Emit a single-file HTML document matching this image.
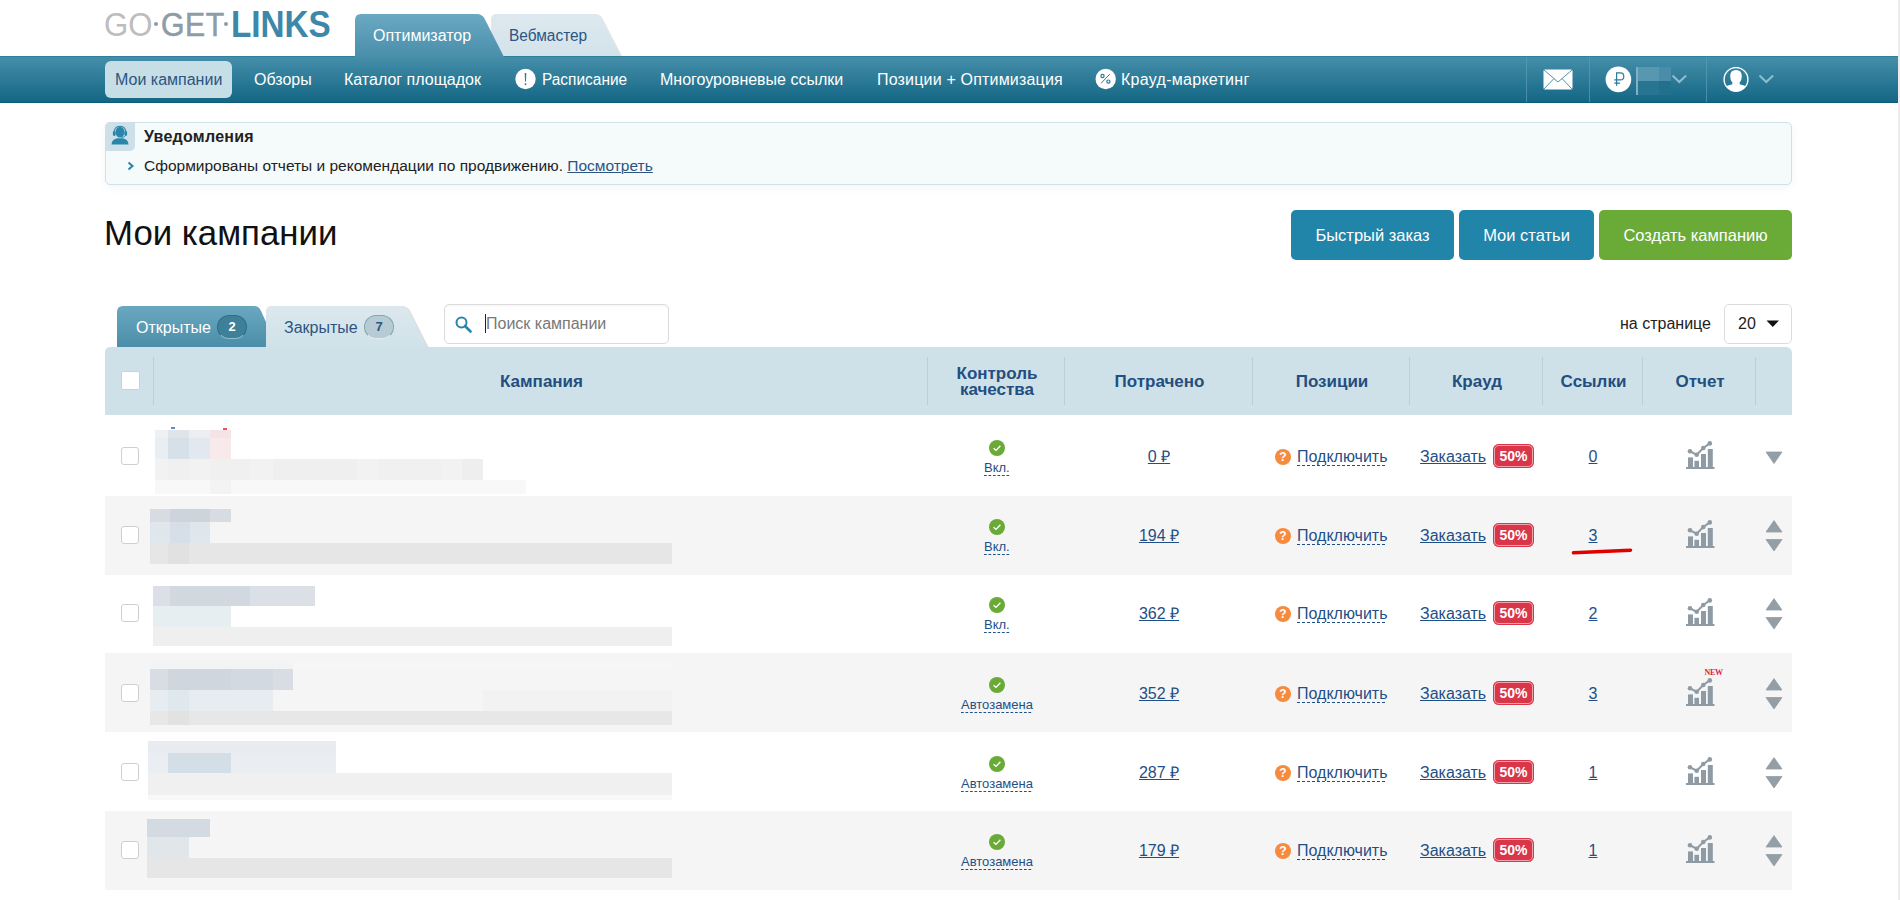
<!DOCTYPE html>
<html><head><meta charset="utf-8">
<style>
*{box-sizing:border-box;margin:0;padding:0}
html,body{width:1900px;height:900px;overflow:hidden;background:#fff}
body{font-family:"Liberation Sans",sans-serif;font-size:16px;color:#222;position:relative}
.abs{position:absolute;white-space:nowrap}
.sb{position:absolute;left:1898px;top:0;width:2px;height:900px;background:#ececec}
/* logo */
.logo span{position:absolute;top:0;line-height:48px;font-size:34px;white-space:nowrap}
/* top tabs */
.ttab{position:absolute;top:14px;height:42px}
/* navbar */
.nav{position:absolute;left:0;top:56px;width:1898px;height:47px;background:linear-gradient(#458ea9,#136785);border-top:1px solid #2e7f9b;border-bottom:1px solid #0b5b79}
.nav .it{position:absolute;top:0;height:45px;line-height:45px;color:#fff;font-size:16px;white-space:nowrap}
.pill{position:absolute;left:105px;top:4px;width:127px;height:37px;border-radius:6px;background:#c6dee6}
.vline{position:absolute;top:0;width:1px;height:45px;background:#5b9db5;opacity:.7}
/* notification */
.note{position:absolute;left:105px;top:122px;width:1687px;height:63px;border:1px solid #cfe1e9;border-radius:5px;background:#f5fafb;box-shadow:0 3px 10px rgba(0,0,0,.045)}
.btn{position:absolute;top:210px;height:50px;border-radius:5px;color:#fff;font-size:16.5px;line-height:50px;text-align:center;white-space:nowrap}
.blue{background:#2184a9}
.green{background:#6aab37}
/* table */
.thead{position:absolute;left:105px;top:347px;width:1687px;height:68px;background:#cfe1e8;border-top-right-radius:6px;border-top-left-radius:5px}
.th{position:absolute;top:1px;padding-left:3px;height:68px;display:flex;align-items:center;justify-content:center;text-align:center;font-weight:bold;font-size:17px;color:#234e80;line-height:16px}
.hdiv{position:absolute;top:10px;width:1px;height:48px;background:#b9d0da}
.row{position:absolute;left:105px;width:1687px}
.gray{background:#f5f5f5}
.cb{position:absolute;width:18px;height:18px;border:1px solid #cfcfcf;border-radius:3px;background:#fff}
.lnk{color:#2c5581;text-decoration:underline;text-underline-offset:2px}
.dash{color:#2c5581;border-bottom:1px dashed #2c5581}
.blk{position:absolute}
.cen{text-align:center}
.lnk16{font-size:16px;line-height:20px;color:#1f4f85}
.lnk{color:#1f4f85;text-decoration:underline;text-decoration-thickness:1px;text-underline-offset:1px}
.dashu{color:#1f4f85;background-image:linear-gradient(to right,#1f4f85 60%,transparent 60%);background-size:5px 1px;background-repeat:repeat-x;background-position:0 17px;padding-bottom:2px}
.qc{font-size:13px;line-height:16px;color:#1f4f85;background-image:linear-gradient(to right,#1f4f85 70%,transparent 70%);background-size:4.5px 1px;background-repeat:repeat-x;background-position:0 15px}
.badge{width:41px;height:24px;border-radius:6px;background:#d9364a;box-shadow:inset 0 0 0 1px #d9364a,inset 0 0 0 2px #f3a3ad;color:#fff;font-weight:bold;font-size:14px;line-height:25px;text-align:center}
</style></head><body>
<div class="sb"></div>

<!-- LOGO -->
<div class="logo">
 <span style="left:104px;top:0.6px;font-size:33.5px;line-height:48px;color:#bdbdbd;transform:scaleX(0.93);transform-origin:0 0">GO</span>
 <span style="left:161px;top:0.6px;font-size:33.5px;line-height:48px;color:#8d9ca7;-webkit-text-stroke:0.6px #8d9ca7;transform:scaleX(0.9);transform-origin:0 0;letter-spacing:0.6px">GET</span>
 <span style="left:231px;top:1px;font-size:36px;line-height:48px;color:#3d87a9;font-weight:bold;transform:scaleX(0.924);transform-origin:0 0">LINKS</span>
 <i style="position:absolute;left:154px;top:22px;width:4px;height:4px;border-radius:2px;background:#8d9ca7"></i>
 <i style="position:absolute;left:224px;top:22px;width:4px;height:4px;border-radius:2px;background:#8d9ca7"></i>
</div>
<!-- NAVBAR -->
<div class="nav">
 <div class="pill"></div>
 <div class="it" style="left:115px;color:#2c5581">Мои кампании</div>
 <div class="it" style="left:254px">Обзоры</div>
 <div class="it" style="left:344px">Каталог площадок</div>
 <div class="it" style="left:542px;transform:scaleX(0.965);transform-origin:0 0">Расписание</div>
 <div class="it" style="left:660px">Многоуровневые ссылки</div>
 <div class="it" style="left:877px;letter-spacing:0.18px">Позиции + Оптимизация</div>
 <div class="it" style="left:1121px;letter-spacing:0.28px">Крауд-маркетинг</div>
 <svg style="position:absolute;left:515px;top:11px" width="22" height="22" viewBox="0 0 22 22"><circle cx="10.5" cy="11" r="10.2" fill="#fff"/><path d="M9.7 5 L11.3 5 L11 13.5 L10 13.5 Z" fill="#2a7b9a"/><rect x="9.7" y="15.3" width="1.6" height="1.8" fill="#2a7b9a"/></svg>
 <svg style="position:absolute;left:1095px;top:11px" width="22" height="22" viewBox="0 0 22 22"><circle cx="10.7" cy="11" r="10.2" fill="#fff"/><circle cx="7.5" cy="8" r="1.6" fill="none" stroke="#2a7b9a" stroke-width="1.2"/><circle cx="13.4" cy="13.6" r="1.6" fill="none" stroke="#2a7b9a" stroke-width="1.2"/><path d="M6 15.3 L14.7 6.3" stroke="#2a7b9a" stroke-width="1"/></svg>
 <div class="vline" style="left:1526px"></div>
 <svg style="position:absolute;left:1543px;top:12px" width="30" height="21" viewBox="0 0 30 21"><rect x="0.5" y="0.5" width="29" height="20" rx="1.5" fill="#fff"/><path d="M1 1 L15 13 L29 1" fill="none" stroke="#3a87a5" stroke-width="0.9"/><path d="M1 20 L11 9.5 M29 20 L19 9.5" fill="none" stroke="#3a87a5" stroke-width="0.9"/></svg>
 <svg style="position:absolute;left:1605px;top:9.3px" width="27" height="27" viewBox="0 0 27 27"><circle cx="13.4" cy="13.4" r="12.8" fill="#fff"/><path d="M11.6 19.8 V6.8 H15.3 Q18.8 6.8 18.8 10.4 Q18.8 13.9 15.3 13.9 H9.3 M9.3 17.1 H15" fill="none" stroke="#2a7b9a" stroke-width="1.2"/></svg>
 <div style="position:absolute;left:1636px;top:10px;width:23px;height:14px;background:#5897b0"></div>
 <div style="position:absolute;left:1659px;top:10px;width:12px;height:14px;background:#4a8daa"></div>
 <div style="position:absolute;left:1636px;top:24px;width:23px;height:14px;background:#287591"></div>
 <div style="position:absolute;left:1659px;top:24px;width:12px;height:14px;background:#23708e"></div>
 <div style="position:absolute;left:1636px;top:10px;width:2px;height:28px;background:#7fb0c4"></div>
 <svg style="position:absolute;left:1671px;top:17px" width="17" height="11" viewBox="0 0 17 11"><path d="M1.5 1.5 L8.3 8.1 L15.1 1.5" fill="none" stroke="#8dbccd" stroke-width="2.1"/></svg>
 <svg style="position:absolute;left:1722px;top:10px" width="28" height="27" viewBox="0 0 28 27"><defs><clipPath id="uc"><circle cx="14" cy="12.45" r="11.6"/></clipPath></defs><circle cx="14" cy="12.45" r="11.9" fill="none" stroke="#fff" stroke-width="1.4"/><g clip-path="url(#uc)"><path d="M14 3 Q19.8 3 19.8 9.2 Q19.8 13.5 17.6 15.8 L17.6 17.3 Q23 18.6 27 21 L27 27 L1 27 L1 21 Q5 18.6 10.4 17.3 L10.4 15.8 Q8.2 13.5 8.2 9.2 Q8.2 3 14 3 Z" fill="#fff"/></g></svg>
 <svg style="position:absolute;left:1758px;top:17px" width="17" height="11" viewBox="0 0 17 11"><path d="M1.5 1.5 L8.3 8.1 L15.1 1.5" fill="none" stroke="#8dbccd" stroke-width="2.1"/></svg>
 <div class="vline" style="left:1589px"></div>
 <div class="vline" style="left:1706px"></div>
</div>

<!-- TOP TABS -->
<svg class="abs" style="left:0;top:0" width="700" height="57">
 <defs>
  <linearGradient id="tg1" x1="0" y1="0" x2="0" y2="1"><stop offset="0" stop-color="#6aa9c2"/><stop offset="1" stop-color="#4a8eaa"/></linearGradient>
  <linearGradient id="tg2" x1="0" y1="0" x2="0" y2="1"><stop offset="0" stop-color="#dde9ef"/><stop offset="1" stop-color="#d3e3ea"/></linearGradient>
 </defs>
 <path d="M491 56 L491 20 Q491 14 497 14 L595 14 Q600 14 602.5 18.5 L622 56 Z" fill="#c9c9c9" opacity="0.5"/>
 <path d="M491 56 L491 20 Q491 14 497 14 L594 14 Q599 14 601.5 18.5 L620.5 56 Z" fill="url(#tg2)"/>
 <path d="M355 57 L355 20 Q355 14 361 14 L477 14 Q482 14 484.5 18.5 L504 57 Z" fill="url(#tg1)"/>
</svg>
<div class="abs" style="left:373px;top:25px;font-size:16px;line-height:22px;color:#fff">Оптимизатор</div>
<div class="abs" style="left:509px;top:25px;font-size:16px;line-height:22px;color:#2c5581;transform:scaleX(0.965);transform-origin:0 0">Вебмастер</div>

<!-- NOTIFICATION -->
<div class="note">
 <div style="position:absolute;left:-1px;top:-1px;width:30px;height:29px;background:#cde0e9;border-radius:5px 0 5px 0"></div>
 <svg style="position:absolute;left:-1px;top:-1px" width="30" height="29" viewBox="0 0 30 29"><path d="M8.8 12.5 Q8.8 4.2 15 4.2 Q21.2 4.2 21.2 12.5" fill="none" stroke="#2a85ab" stroke-width="1.1"/><ellipse cx="15" cy="10.2" rx="4.6" ry="5.4" fill="#2a85ab"/><rect x="7.9" y="9.3" width="2.6" height="4.6" rx="1.1" fill="#2a85ab"/><rect x="19.5" y="9.3" width="2.6" height="4.6" rx="1.1" fill="#2a85ab"/><path d="M20.5 13.5 Q19.8 15.4 16.5 15.4" fill="none" stroke="#2a85ab" stroke-width="0.9"/><path d="M6.5 22.5 Q6.8 17 12.5 16.2 L17.5 16.2 Q23.2 17 23.5 22.5 Z" fill="#2a85ab"/></svg>
 <div class="abs" style="left:38px;top:4px;font-size:16px;letter-spacing:0.25px;line-height:20px;font-weight:bold;color:#222">Уведомления</div>
 <svg style="position:absolute;left:21px;top:38px" width="8" height="10" viewBox="0 0 8 10"><path d="M1.5 1.5 L5.5 5 L1.5 8.5" fill="none" stroke="#2a85ab" stroke-width="2"/></svg>
 <div class="abs" style="left:38px;top:33px;font-size:15.5px;line-height:20px;color:#222">Сформированы отчеты и рекомендации по продвижению. <span class="lnk" style="color:#2c5581">Посмотреть</span></div>
</div>

<div class="abs" style="left:104px;top:205.5px;font-size:34.8px;line-height:54px;color:#111">Мои кампании</div>
<div class="btn blue" style="left:1291px;width:163px">Быстрый заказ</div>
<div class="btn blue" style="left:1459px;width:135px">Мои статьи</div>
<div class="btn green" style="left:1599px;width:193px">Создать кампанию</div>


<!-- LIST TABS -->
<svg class="abs" style="left:0;top:300px" width="440" height="48">
 <defs>
  <linearGradient id="lt1" x1="0" y1="0" x2="0" y2="1"><stop offset="0" stop-color="#6aa8c0"/><stop offset="1" stop-color="#4b8ea9"/></linearGradient>
  <linearGradient id="lt2" x1="0" y1="0" x2="0" y2="1"><stop offset="0" stop-color="#dce8ee"/><stop offset="1" stop-color="#d0e2e9"/></linearGradient>
 </defs>
 <path d="M266 47 L266 12 Q266 6 272 6 L402 6 Q407 6 410 10.5 L428.5 47 Z" fill="#c8c8c8" opacity="0.6"/>
 <path d="M266 47 L266 12 Q266 6 272 6 L401 6 Q406 6 408.5 10.5 L426.5 47 Z" fill="url(#lt2)"/>
 <path d="M117 47 L117 12 Q117 6 123 6 L254 6 Q259 6 261 11 L266 22 L266 47 Z" fill="url(#lt1)"/>
</svg>
<div class="abs" style="left:136px;top:318px;font-size:16px;line-height:20px;color:#fff">Открытые</div>
<div class="abs" style="left:217px;top:315px;width:30px;height:24px;border-radius:12px;background:#3f8099;border:1px solid #2f6d86;border-bottom-color:#8cbfcf;color:#fff;font-weight:bold;font-size:13px;line-height:22px;text-align:center">2</div>
<div class="abs" style="left:284px;top:318px;font-size:16px;line-height:20px;color:#2c5581">Закрытые</div>
<div class="abs" style="left:364px;top:315px;width:30px;height:24px;border-radius:12px;background:#b6cbd4;border:1px solid #86a4b1;border-bottom-color:#e2edf1;color:#2c5581;font-weight:bold;font-size:13px;line-height:22px;text-align:center">7</div>

<div class="abs" style="left:444px;top:304px;width:225px;height:40px;border:1px solid #dcdcdc;border-radius:5px;background:#fff;box-shadow:inset 0 1px 2px rgba(0,0,0,.05)"></div>
<svg class="abs" style="left:455px;top:316px" width="18" height="17" viewBox="0 0 18 17"><circle cx="6.5" cy="6.5" r="5" fill="none" stroke="#2a85ab" stroke-width="2"/><path d="M10 10 L15.5 15.5" stroke="#2a85ab" stroke-width="2.6" stroke-linecap="round"/></svg>
<div class="abs" style="left:485px;top:314px;width:1px;height:19px;background:#222"></div>
<div class="abs" style="left:486px;top:314px;font-size:16px;line-height:20px;color:#787878">Поиск кампании</div>

<div class="abs" style="left:1620px;top:314px;font-size:16px;line-height:20px;color:#222">на странице</div>
<div class="abs" style="left:1724px;top:304px;width:68px;height:40px;border:1px solid #dcdcdc;border-radius:5px;background:#fff"></div>
<div class="abs" style="left:1738px;top:314px;font-size:16px;line-height:20px;color:#222">20</div>
<svg class="abs" style="left:1766px;top:320px" width="14" height="8" viewBox="0 0 14 8"><path d="M0.5 0.5 L13 0.5 L6.75 7 Z" fill="#111"/></svg>
<!-- TABLE HEADER -->
<div class="thead">
 <div style="position:absolute;left:16px;top:24px;width:19px;height:19px;border:1px solid #d0d0d0;border-radius:2px;background:#fff"></div>
 <div class="hdiv" style="left:48px"></div>
 <div class="th" style="left:48px;width:774px">Кампания</div>
 <div class="hdiv" style="left:822px"></div>
 <div class="th" style="left:822px;width:137px">Контроль<br>качества</div>
 <div class="hdiv" style="left:959px"></div>
 <div class="th" style="left:959px;width:188px">Потрачено</div>
 <div class="hdiv" style="left:1147px"></div>
 <div class="th" style="left:1147px;width:157px">Позиции</div>
 <div class="hdiv" style="left:1304px"></div>
 <div class="th" style="left:1304px;width:133px">Крауд</div>
 <div class="hdiv" style="left:1437px"></div>
 <div class="th" style="left:1437px;width:100px">Ссылки</div>
 <div class="hdiv" style="left:1537px"></div>
 <div class="th" style="left:1537px;width:113px">Отчет</div>
 <div class="hdiv" style="left:1650px"></div>
</div>

<!-- ROWS -->
<div class="row" style="top:415px;height:81px;background:#fff"></div>
<div class="blk" style="left:155px;top:430px;width:13px;height:8px;background:#eef0f3"></div>
<div class="blk" style="left:168px;top:430px;width:21px;height:8px;background:#dfe4e9"></div>
<div class="blk" style="left:189px;top:430px;width:21px;height:8px;background:#eceef2"></div>
<div class="blk" style="left:210px;top:430px;width:21px;height:8px;background:#f5e3e5"></div>
<div class="blk" style="left:155px;top:438px;width:13px;height:21px;background:#e8eef2"></div>
<div class="blk" style="left:168px;top:438px;width:21px;height:21px;background:#d5e0e8"></div>
<div class="blk" style="left:189px;top:438px;width:21px;height:21px;background:#e2e8ef"></div>
<div class="blk" style="left:210px;top:438px;width:21px;height:21px;background:#f8e9eb"></div>
<div class="blk" style="left:155px;top:459px;width:328px;height:21px;background:#f2f2f2"></div>
<div class="blk" style="left:168px;top:459px;width:21px;height:21px;background:#eff0ef"></div>
<div class="blk" style="left:210px;top:459px;width:40px;height:21px;background:#f0f0f0"></div>
<div class="blk" style="left:273px;top:459px;width:84px;height:21px;background:#efefef"></div>
<div class="blk" style="left:378px;top:459px;width:63px;height:21px;background:#f0f0f0"></div>
<div class="blk" style="left:462px;top:459px;width:21px;height:21px;background:#eeeeee"></div>
<div class="blk" style="left:155px;top:480px;width:371px;height:14px;background:#f8f8f8"></div>
<div class="blk" style="left:210px;top:480px;width:21px;height:14px;background:#f3f3f3"></div>
<div class="blk" style="left:171px;top:427px;width:4px;height:2px;background:#5a90c4"></div>
<div class="blk" style="left:223px;top:428px;width:4px;height:2px;background:#e8506a"></div>
<div class="cb" style="left:121px;top:447px"></div>
<svg class="abs" style="left:989px;top:439.7px" width="16" height="16" viewBox="0 0 16 16"><circle cx="8" cy="8" r="8" fill="#6aab37"/><path d="M4.6 8.2 L7 10.4 L11.4 5.8" fill="none" stroke="#fff" stroke-width="1.35"/></svg>
<div class="abs qc" style="left:984.0px;top:459.8px">Вкл.</div>
<div class="abs cen lnk16" style="left:1061px;width:196px;top:447.0px"><span class="lnk">0 ₽</span></div>
<svg class="abs" style="left:1275px;top:449.0px" width="16" height="16" viewBox="0 0 16 16"><circle cx="8" cy="8" r="8" fill="#f68a3d"/><text x="8" y="12.3" text-anchor="middle" font-family="Liberation Sans" font-size="12" font-weight="bold" fill="#fff">?</text></svg>
<div class="abs lnk16" style="left:1297px;top:447.0px"><span class="dashu">Подключить</span></div>
<div class="abs lnk16" style="left:1420px;top:447.0px"><span class="lnk">Заказать</span></div>
<div class="abs badge" style="left:1493px;top:444.0px">50%</div>
<div class="abs cen lnk16" style="left:1543px;width:100px;top:447.0px"><span class="lnk">0</span></div>
<svg class="abs" style="left:1686px;top:440.5px" width="29" height="29" viewBox="0 0 29 29"><g fill="#8f9ba4"><rect x="0" y="26" width="28.5" height="2"/><rect x="2" y="16.4" width="5" height="10"/><rect x="8.4" y="19.8" width="4.6" height="7"/><rect x="15" y="13" width="5" height="13.5"/><rect x="21.8" y="8" width="5" height="18.5"/><circle cx="4" cy="10.3" r="2.3"/><circle cx="10.7" cy="13.7" r="2.3"/><circle cx="17.3" cy="7" r="2.3"/><circle cx="23.8" cy="2.4" r="2.3"/></g><path d="M4 10.3 L10.7 13.7 L17.3 7 L23.8 2.4" fill="none" stroke="#8f9ba4" stroke-width="2"/></svg>
<svg class="abs" style="left:1765px;top:450.5px" width="18" height="14" viewBox="0 0 18 14"><path d="M1 1 L17 1 L9 12.5 Z" fill="#939ea6" stroke="#939ea6" stroke-width="0.8" stroke-linejoin="round"/></svg>
<div class="row" style="top:496px;height:79px;background:#f5f5f5"></div>
<div class="blk" style="left:150px;top:509px;width:81px;height:13px;background:#d7dce3"></div>
<div class="blk" style="left:170px;top:509px;width:40px;height:13px;background:#cdd4dc"></div>
<div class="blk" style="left:150px;top:522px;width:60px;height:21px;background:#dfe6ec"></div>
<div class="blk" style="left:170px;top:522px;width:20px;height:21px;background:#d6dfe7"></div>
<div class="blk" style="left:150px;top:543px;width:522px;height:21px;background:#e6e6e6"></div>
<div class="blk" style="left:168px;top:543px;width:21px;height:21px;background:#e1e1e1"></div>
<div class="cb" style="left:121px;top:526px"></div>
<svg class="abs" style="left:989px;top:518.7px" width="16" height="16" viewBox="0 0 16 16"><circle cx="8" cy="8" r="8" fill="#6aab37"/><path d="M4.6 8.2 L7 10.4 L11.4 5.8" fill="none" stroke="#fff" stroke-width="1.35"/></svg>
<div class="abs qc" style="left:984.0px;top:538.8px">Вкл.</div>
<div class="abs cen lnk16" style="left:1061px;width:196px;top:526.0px"><span class="lnk">194 ₽</span></div>
<svg class="abs" style="left:1275px;top:528.0px" width="16" height="16" viewBox="0 0 16 16"><circle cx="8" cy="8" r="8" fill="#f68a3d"/><text x="8" y="12.3" text-anchor="middle" font-family="Liberation Sans" font-size="12" font-weight="bold" fill="#fff">?</text></svg>
<div class="abs lnk16" style="left:1297px;top:526.0px"><span class="dashu">Подключить</span></div>
<div class="abs lnk16" style="left:1420px;top:526.0px"><span class="lnk">Заказать</span></div>
<div class="abs badge" style="left:1493px;top:523.0px">50%</div>
<div class="abs cen lnk16" style="left:1543px;width:100px;top:526.0px"><span class="lnk">3</span></div>
<svg class="abs" style="left:1686px;top:519.5px" width="29" height="29" viewBox="0 0 29 29"><g fill="#8f9ba4"><rect x="0" y="26" width="28.5" height="2"/><rect x="2" y="16.4" width="5" height="10"/><rect x="8.4" y="19.8" width="4.6" height="7"/><rect x="15" y="13" width="5" height="13.5"/><rect x="21.8" y="8" width="5" height="18.5"/><circle cx="4" cy="10.3" r="2.3"/><circle cx="10.7" cy="13.7" r="2.3"/><circle cx="17.3" cy="7" r="2.3"/><circle cx="23.8" cy="2.4" r="2.3"/></g><path d="M4 10.3 L10.7 13.7 L17.3 7 L23.8 2.4" fill="none" stroke="#8f9ba4" stroke-width="2"/></svg>
<svg class="abs" style="left:1765px;top:520.3px" width="18" height="32" viewBox="0 0 18 32"><path d="M1 12 L9 0.6 L17 12 Z M1 19.5 L17 19.5 L9 31 Z" fill="#939ea6" stroke="#939ea6" stroke-width="0.8" stroke-linejoin="round"/></svg>
<div class="row" style="top:575px;height:78px;background:#fff"></div>
<div class="blk" style="left:153px;top:586px;width:162px;height:20px;background:#dbe0e6"></div>
<div class="blk" style="left:170px;top:586px;width:80px;height:20px;background:#d2d8df"></div>
<div class="blk" style="left:153px;top:606px;width:78px;height:21px;background:#e6eef2"></div>
<div class="blk" style="left:153px;top:627px;width:519px;height:19px;background:#efefef"></div>
<div class="cb" style="left:121px;top:604px"></div>
<svg class="abs" style="left:989px;top:596.8px" width="16" height="16" viewBox="0 0 16 16"><circle cx="8" cy="8" r="8" fill="#6aab37"/><path d="M4.6 8.2 L7 10.4 L11.4 5.8" fill="none" stroke="#fff" stroke-width="1.35"/></svg>
<div class="abs qc" style="left:984.0px;top:616.9px">Вкл.</div>
<div class="abs cen lnk16" style="left:1061px;width:196px;top:604.1px"><span class="lnk">362 ₽</span></div>
<svg class="abs" style="left:1275px;top:606.1px" width="16" height="16" viewBox="0 0 16 16"><circle cx="8" cy="8" r="8" fill="#f68a3d"/><text x="8" y="12.3" text-anchor="middle" font-family="Liberation Sans" font-size="12" font-weight="bold" fill="#fff">?</text></svg>
<div class="abs lnk16" style="left:1297px;top:604.1px"><span class="dashu">Подключить</span></div>
<div class="abs lnk16" style="left:1420px;top:604.1px"><span class="lnk">Заказать</span></div>
<div class="abs badge" style="left:1493px;top:601.1px">50%</div>
<div class="abs cen lnk16" style="left:1543px;width:100px;top:604.1px"><span class="lnk">2</span></div>
<svg class="abs" style="left:1686px;top:597.6px" width="29" height="29" viewBox="0 0 29 29"><g fill="#8f9ba4"><rect x="0" y="26" width="28.5" height="2"/><rect x="2" y="16.4" width="5" height="10"/><rect x="8.4" y="19.8" width="4.6" height="7"/><rect x="15" y="13" width="5" height="13.5"/><rect x="21.8" y="8" width="5" height="18.5"/><circle cx="4" cy="10.3" r="2.3"/><circle cx="10.7" cy="13.7" r="2.3"/><circle cx="17.3" cy="7" r="2.3"/><circle cx="23.8" cy="2.4" r="2.3"/></g><path d="M4 10.3 L10.7 13.7 L17.3 7 L23.8 2.4" fill="none" stroke="#8f9ba4" stroke-width="2"/></svg>
<svg class="abs" style="left:1765px;top:598.4px" width="18" height="32" viewBox="0 0 18 32"><path d="M1 12 L9 0.6 L17 12 Z M1 19.5 L17 19.5 L9 31 Z" fill="#939ea6" stroke="#939ea6" stroke-width="0.8" stroke-linejoin="round"/></svg>
<div class="row" style="top:653px;height:79px;background:#f5f5f5"></div>
<div class="blk" style="left:150px;top:663px;width:522px;height:6px;background:#f7f7f7"></div>
<div class="blk" style="left:150px;top:663px;width:143px;height:6px;background:#f2f3f4"></div>
<div class="blk" style="left:483px;top:690px;width:189px;height:21px;background:#f2f2f2"></div>
<div class="blk" style="left:150px;top:669px;width:143px;height:21px;background:#d8dde3"></div>
<div class="blk" style="left:168px;top:669px;width:84px;height:21px;background:#d0d6de"></div>
<div class="blk" style="left:231px;top:669px;width:42px;height:21px;background:#d3d9e0"></div>
<div class="blk" style="left:150px;top:690px;width:123px;height:21px;background:#e6ecef"></div>
<div class="blk" style="left:168px;top:690px;width:21px;height:21px;background:#dfe8ec"></div>
<div class="blk" style="left:150px;top:711px;width:522px;height:14px;background:#e7e7e7"></div>
<div class="blk" style="left:168px;top:711px;width:21px;height:14px;background:#e2e2e2"></div>
<div class="cb" style="left:121px;top:684px"></div>
<svg class="abs" style="left:989px;top:676.7px" width="16" height="16" viewBox="0 0 16 16"><circle cx="8" cy="8" r="8" fill="#6aab37"/><path d="M4.6 8.2 L7 10.4 L11.4 5.8" fill="none" stroke="#fff" stroke-width="1.35"/></svg>
<div class="abs qc" style="left:961.0px;top:696.8px">Автозамена</div>
<div class="abs cen lnk16" style="left:1061px;width:196px;top:684.0px"><span class="lnk">352 ₽</span></div>
<svg class="abs" style="left:1275px;top:686.0px" width="16" height="16" viewBox="0 0 16 16"><circle cx="8" cy="8" r="8" fill="#f68a3d"/><text x="8" y="12.3" text-anchor="middle" font-family="Liberation Sans" font-size="12" font-weight="bold" fill="#fff">?</text></svg>
<div class="abs lnk16" style="left:1297px;top:684.0px"><span class="dashu">Подключить</span></div>
<div class="abs lnk16" style="left:1420px;top:684.0px"><span class="lnk">Заказать</span></div>
<div class="abs badge" style="left:1493px;top:681.0px">50%</div>
<div class="abs cen lnk16" style="left:1543px;width:100px;top:684.0px"><span class="lnk">3</span></div>
<svg class="abs" style="left:1686px;top:677.5px" width="29" height="29" viewBox="0 0 29 29"><g fill="#8f9ba4"><rect x="0" y="26" width="28.5" height="2"/><rect x="2" y="16.4" width="5" height="10"/><rect x="8.4" y="19.8" width="4.6" height="7"/><rect x="15" y="13" width="5" height="13.5"/><rect x="21.8" y="8" width="5" height="18.5"/><circle cx="4" cy="10.3" r="2.3"/><circle cx="10.7" cy="13.7" r="2.3"/><circle cx="17.3" cy="7" r="2.3"/><circle cx="23.8" cy="2.4" r="2.3"/></g><path d="M4 10.3 L10.7 13.7 L17.3 7 L23.8 2.4" fill="none" stroke="#8f9ba4" stroke-width="2"/></svg>
<div class="abs" style="left:1704.5px;top:667.5px;font-family:'Liberation Serif';font-weight:bold;font-size:8px;line-height:9px;color:#e0233a;letter-spacing:-0.3px">NEW</div>
<svg class="abs" style="left:1765px;top:678.3px" width="18" height="32" viewBox="0 0 18 32"><path d="M1 12 L9 0.6 L17 12 Z M1 19.5 L17 19.5 L9 31 Z" fill="#939ea6" stroke="#939ea6" stroke-width="0.8" stroke-linejoin="round"/></svg>
<div class="row" style="top:732px;height:79px;background:#fff"></div>
<div class="blk" style="left:148px;top:741px;width:188px;height:12px;background:#e8ebef"></div>
<div class="blk" style="left:148px;top:753px;width:188px;height:20px;background:#eaedf1"></div>
<div class="blk" style="left:168px;top:753px;width:63px;height:20px;background:#d3dee6"></div>
<div class="blk" style="left:148px;top:773px;width:524px;height:22px;background:#f0f0f0"></div>
<div class="blk" style="left:148px;top:795px;width:524px;height:5px;background:#f8f8f8"></div>
<div class="cb" style="left:121px;top:763px"></div>
<svg class="abs" style="left:989px;top:755.7px" width="16" height="16" viewBox="0 0 16 16"><circle cx="8" cy="8" r="8" fill="#6aab37"/><path d="M4.6 8.2 L7 10.4 L11.4 5.8" fill="none" stroke="#fff" stroke-width="1.35"/></svg>
<div class="abs qc" style="left:961.0px;top:775.8px">Автозамена</div>
<div class="abs cen lnk16" style="left:1061px;width:196px;top:763.0px"><span class="lnk">287 ₽</span></div>
<svg class="abs" style="left:1275px;top:765.0px" width="16" height="16" viewBox="0 0 16 16"><circle cx="8" cy="8" r="8" fill="#f68a3d"/><text x="8" y="12.3" text-anchor="middle" font-family="Liberation Sans" font-size="12" font-weight="bold" fill="#fff">?</text></svg>
<div class="abs lnk16" style="left:1297px;top:763.0px"><span class="dashu">Подключить</span></div>
<div class="abs lnk16" style="left:1420px;top:763.0px"><span class="lnk">Заказать</span></div>
<div class="abs badge" style="left:1493px;top:760.0px">50%</div>
<div class="abs cen lnk16" style="left:1543px;width:100px;top:763.0px"><span class="lnk">1</span></div>
<svg class="abs" style="left:1686px;top:756.5px" width="29" height="29" viewBox="0 0 29 29"><g fill="#8f9ba4"><rect x="0" y="26" width="28.5" height="2"/><rect x="2" y="16.4" width="5" height="10"/><rect x="8.4" y="19.8" width="4.6" height="7"/><rect x="15" y="13" width="5" height="13.5"/><rect x="21.8" y="8" width="5" height="18.5"/><circle cx="4" cy="10.3" r="2.3"/><circle cx="10.7" cy="13.7" r="2.3"/><circle cx="17.3" cy="7" r="2.3"/><circle cx="23.8" cy="2.4" r="2.3"/></g><path d="M4 10.3 L10.7 13.7 L17.3 7 L23.8 2.4" fill="none" stroke="#8f9ba4" stroke-width="2"/></svg>
<svg class="abs" style="left:1765px;top:757.3px" width="18" height="32" viewBox="0 0 18 32"><path d="M1 12 L9 0.6 L17 12 Z M1 19.5 L17 19.5 L9 31 Z" fill="#939ea6" stroke="#939ea6" stroke-width="0.8" stroke-linejoin="round"/></svg>
<div class="row" style="top:811px;height:79px;background:#f5f5f5"></div>
<div class="blk" style="left:147px;top:819px;width:63px;height:18px;background:#d4dae1"></div>
<div class="blk" style="left:147px;top:837px;width:42px;height:21px;background:#e0e6ea"></div>
<div class="blk" style="left:147px;top:858px;width:525px;height:20px;background:#e6e6e6"></div>
<div class="cb" style="left:121px;top:841px"></div>
<svg class="abs" style="left:989px;top:833.7px" width="16" height="16" viewBox="0 0 16 16"><circle cx="8" cy="8" r="8" fill="#6aab37"/><path d="M4.6 8.2 L7 10.4 L11.4 5.8" fill="none" stroke="#fff" stroke-width="1.35"/></svg>
<div class="abs qc" style="left:961.0px;top:853.8px">Автозамена</div>
<div class="abs cen lnk16" style="left:1061px;width:196px;top:841.0px"><span class="lnk">179 ₽</span></div>
<svg class="abs" style="left:1275px;top:843.0px" width="16" height="16" viewBox="0 0 16 16"><circle cx="8" cy="8" r="8" fill="#f68a3d"/><text x="8" y="12.3" text-anchor="middle" font-family="Liberation Sans" font-size="12" font-weight="bold" fill="#fff">?</text></svg>
<div class="abs lnk16" style="left:1297px;top:841.0px"><span class="dashu">Подключить</span></div>
<div class="abs lnk16" style="left:1420px;top:841.0px"><span class="lnk">Заказать</span></div>
<div class="abs badge" style="left:1493px;top:838.0px">50%</div>
<div class="abs cen lnk16" style="left:1543px;width:100px;top:841.0px"><span class="lnk">1</span></div>
<svg class="abs" style="left:1686px;top:834.5px" width="29" height="29" viewBox="0 0 29 29"><g fill="#8f9ba4"><rect x="0" y="26" width="28.5" height="2"/><rect x="2" y="16.4" width="5" height="10"/><rect x="8.4" y="19.8" width="4.6" height="7"/><rect x="15" y="13" width="5" height="13.5"/><rect x="21.8" y="8" width="5" height="18.5"/><circle cx="4" cy="10.3" r="2.3"/><circle cx="10.7" cy="13.7" r="2.3"/><circle cx="17.3" cy="7" r="2.3"/><circle cx="23.8" cy="2.4" r="2.3"/></g><path d="M4 10.3 L10.7 13.7 L17.3 7 L23.8 2.4" fill="none" stroke="#8f9ba4" stroke-width="2"/></svg>
<svg class="abs" style="left:1765px;top:835.3px" width="18" height="32" viewBox="0 0 18 32"><path d="M1 12 L9 0.6 L17 12 Z M1 19.5 L17 19.5 L9 31 Z" fill="#939ea6" stroke="#939ea6" stroke-width="0.8" stroke-linejoin="round"/></svg>
<svg class="abs" style="left:1570px;top:546px" width="64" height="10" viewBox="0 0 64 10"><path d="M3.5 6.8 Q30 5.5 60.5 4.2" fill="none" stroke="#e00000" stroke-width="3.6" stroke-linecap="round"/></svg>
<!-- /ROWS -->
</body></html>
